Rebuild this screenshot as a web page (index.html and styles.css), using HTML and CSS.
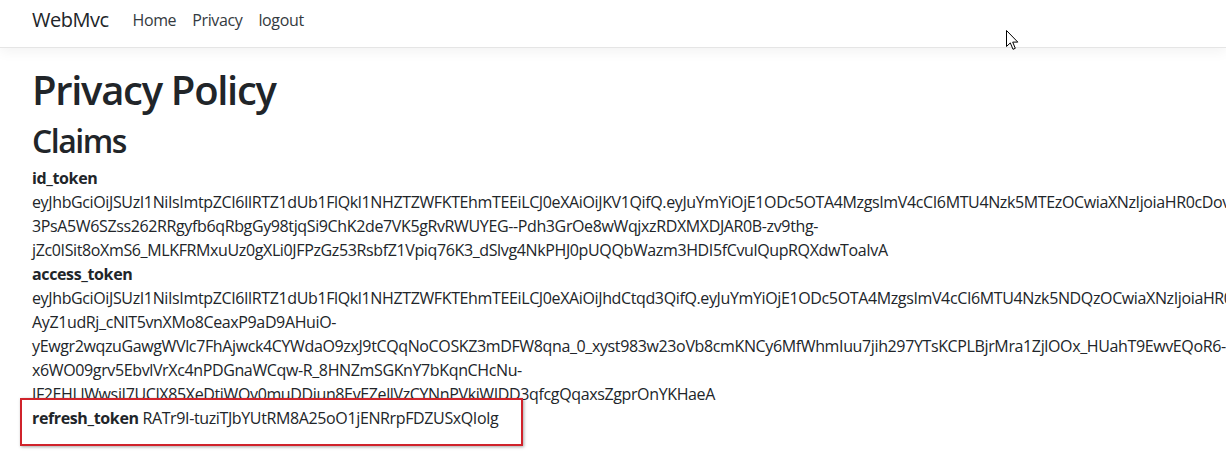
FILE: index.html
```html
<!DOCTYPE html>
<html lang="en">
<head>
<meta charset="utf-8">
<title>Privacy Policy - WebMvc</title>
<link rel="stylesheet" href="styles.css">
</head>
<body>
<header class="site-header">
  <nav class="navbar">
    <a class="brand" href="#">WebMvc</a>
    <ul class="nav">
      <li><a class="nav-link" href="#">Home</a></li>
      <li><a class="nav-link" href="#">Privacy</a></li>
      <li><a class="nav-link" href="#">logout</a></li>
    </ul>
  </nav>
</header>
<main class="main">
  <h1 class="title">Privacy Policy</h1>
  <h2 class="subtitle">Claims</h2>
  <div class="claims">
    <div class="claim">
      <strong class="claim-key">id_token</strong><br>
      eyJhbGciOiJSUzI1NiIsImtpZCI6IlRTZ1dUb1FlQkl1NHZTZWFKTEhmTEEiLCJ0eXAiOiJKV1QifQ.eyJuYmYiOjE1ODc5OTA4MzgsImV4cCI6MTU4Nzk5MTEzOCwiaXNzIjoiaHR0cDovL2xvY2FsaG9zdDo1MDAwIiwiYXVkIjoid2ViX212YyJ9<br>
      3PsA5W6SZss262RRgyfb6qRbgGy98tjqSi9ChK2de7VK5gRvRWUYEG--Pdh3GrOe8wWqjxzRDXMXDJAR0B-zv9thg-<br>
      jZc0ISit8oXmS6_MLKFRMxuUz0gXLi0JFPzGz53RsbfZ1Vpiq76K3_dSlvg4NkPHJ0pUQQbWazm3HDI5fCvulQupRQXdwToaIvA
    </div>
    <div class="claim">
      <strong class="claim-key">access_token</strong><br>
      eyJhbGciOiJSUzI1NiIsImtpZCI6IlRTZ1dUb1FlQkl1NHZTZWFKTEhmTEEiLCJ0eXAiOiJhdCtqd3QifQ.eyJuYmYiOjE1ODc5OTA4MzgsImV4cCI6MTU4Nzk5NDQzOCwiaXNzIjoiaHR0cDovL2xvY2FsaG9zdDo1MDAwIn0<br>
      AyZ1udRj_cNlT5vnXMo8CeaxP9aD9AHuiO-<br>
      yEwgr2wqzuGawgWVlc7FhAjwck4CYWdaO9zxJ9tCQqNoCOSKZ3mDFW8qna_0_xyst983w23oVb8cmKNCy6MfWhmIuu7jih297YTsKCPLBjrMra1ZjlOOx_HUahT9EwvEQoR6-<br>
      x6WO09grv5EbvlVrXc4nPDGnaWCqw-R_8HNZmSGKnY7bKqnCHcNu-<br>
      JF2EHLlWwsiI7UCJX85XeDtiWOy0muDDiun8EvEZellVzCYNnPVkiWIDD3qfcgQqaxsZgprOnYKHaeA
    </div>
    <div class="claim claim-highlight">
      <strong class="claim-key">refresh_token</strong> RATr9I-tuziTJbYUtRM8A25oO1jENRrpFDZUSxQIolg
    </div>
  </div>
</main>
<svg class="cursor" width="14" height="21" viewBox="0 0 14 21" aria-hidden="true">
  <path d="M0.5 0.5 L0.5 16.5 L4.3 12.9 L7 19.3 L9.3 18.3 L6.7 12.1 L11.8 12.1 Z" fill="#fff" stroke="#000" stroke-width="1" stroke-linejoin="miter"/>
</svg>
</body>
</html>
```

FILE: styles.css
```css
html, body {
  margin: 0;
  padding: 0;
  overflow: hidden;
}

body {
  font-family: "Open Sans", "Noto Sans", sans-serif;
  font-size: 16px;
  line-height: 1.5;
  letter-spacing: -0.37px;
  color: #212529;
  background: #fff;
  position: relative;
  min-height: 459px;
}

a {
  text-decoration: none;
}

.site-header {
  margin-bottom: 16px;
}

.navbar {
  display: flex;
  align-items: center;
  padding: 5px 32px 12px;
  border-bottom: 1px solid #e5e5e5;
  box-shadow: 0 4px 12px rgba(0, 0, 0, 0.05);
}

.brand {
  font-size: 20px;
  line-height: 30px;
  letter-spacing: -0.5px;
  color: #212529;
  margin-right: 16px;
}

.nav {
  display: flex;
  list-style: none;
  margin: 0;
  padding: 0;
}

.nav-link {
  display: block;
  padding: 0 8px;
  line-height: 24px;
  color: #343a40;
}

.main {
  padding: 2px 32px 0;
}

.title {
  font-size: 40px;
  font-weight: 600;
  line-height: 48px;
  letter-spacing: -1.3px;
  margin: 0 0 8px;
}

.subtitle {
  font-size: 32px;
  font-weight: 600;
  line-height: 38.4px;
  letter-spacing: -1.5px;
  margin: 0 0 6px;
}

.claims {
  white-space: nowrap;
}

.claim-key {
  font-weight: 700;
}

.claim-highlight {
  position: relative;
  box-sizing: border-box;
  width: 503px;
  margin: -8px 0 0 -12px;
  padding: 6px 0 14px 10px;
  border: 2px solid #d0232b;
  background: #fff;
  box-shadow: 1px 1px 3px rgba(0, 0, 0, 0.35);
}

.cursor {
  position: absolute;
  left: 1006px;
  top: 30px;
}
```
